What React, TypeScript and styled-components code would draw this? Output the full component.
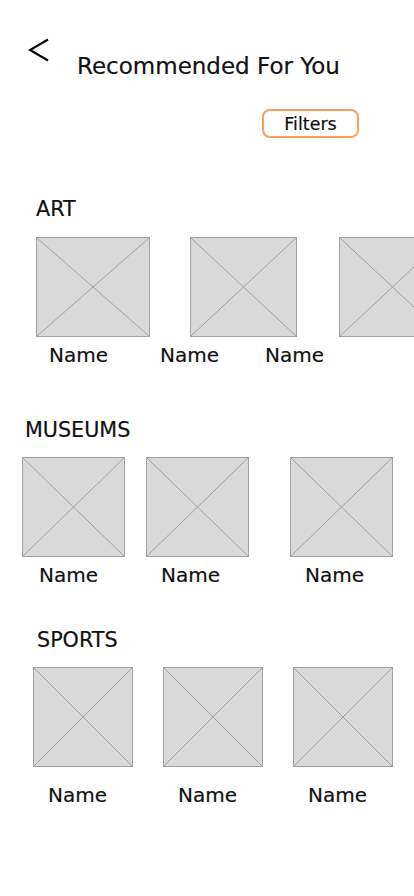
import React from "react";
import styled, { createGlobalStyle } from "styled-components";

const Global = createGlobalStyle`
  html, body { margin: 0; padding: 0; background: #ffffff; }
  body {
    font-family: "DejaVu Sans", "Noto Sans", sans-serif;
    color: #111111;
    overflow: hidden;
    -webkit-text-stroke: 0.2px #111111;
  }
`;

const Page = styled.div`
  width: 414px;
  min-height: 896px;
  overflow: hidden;
  background: #ffffff;
`;

const Header = styled.header`
  display: flex;
  align-items: flex-start;
  padding: 38px 0 0 28px;
`;

const BackButton = styled.button`
  width: 22px;
  height: 24px;
  padding: 0;
  border: none;
  background: none;
  display: flex;
  cursor: pointer;
`;

const Title = styled.h1`
  margin: 14px 0 0 27px;
  font-size: 23px;
  line-height: 28px;
  font-weight: 400;
`;

const FilterRow = styled.div`
  display: flex;
  justify-content: flex-end;
  padding: 29px 55px 0 0;
`;

const FilterButton = styled.button`
  box-sizing: border-box;
  width: 97px;
  height: 29px;
  border: 2px solid #f9a05e;
  border-radius: 8px;
  background: #ffffff;
  font-family: "DejaVu Sans", sans-serif;
  font-size: 17.5px;
  line-height: 22px;
  color: #111111;
  -webkit-text-stroke: 0.2px #111111;
  padding: 0;
  cursor: pointer;
`;

const Section = styled.section<{ $top: number }>`
  margin-top: ${(p) => p.$top}px;
`;

const Heading = styled.h2<{ $ml: number }>`
  margin: 0 0 0 ${(p) => p.$ml}px;
  font-size: 20.7px;
  line-height: 24px;
  font-weight: 400;
`;

const Row = styled.div<{ $top: number }>`
  display: flex;
  margin-top: ${(p) => p.$top}px;
  white-space: nowrap;
`;

const Frame = styled.div<{ $w: number; $ml: number }>`
  flex: none;
  width: ${(p) => p.$w}px;
  height: 100px;
  margin-left: ${(p) => p.$ml}px;
  background: #d9d9d9;
  box-sizing: border-box;
  border: 1px solid #a0a0a0;
  svg { display: block; width: 100%; height: 100%; }
`;

const Name = styled.span<{ $ml: number }>`
  flex: none;
  margin-left: ${(p) => p.$ml}px;
  font-size: 20px;
  line-height: 24px;
  font-weight: 400;
`;

const Placeholder = ({ w, ml }: { w: number; ml: number }) => (
  <Frame $w={w} $ml={ml}>
    <svg viewBox="0 0 100 100" preserveAspectRatio="none">
      <line x1="0" y1="0" x2="100" y2="100" stroke="#a0a0a0" strokeWidth="1" vectorEffect="non-scaling-stroke" />
      <line x1="100" y1="0" x2="0" y2="100" stroke="#a0a0a0" strokeWidth="1" vectorEffect="non-scaling-stroke" />
    </svg>
  </Frame>
);

type Cat = {
  title: string;
  top: number;
  headingLeft: number;
  imgTop: number;
  frames: { w: number; ml: number }[];
  nameTop: number;
  names: number[];
};

const cats: Cat[] = [
  {
    title: "ART",
    top: 59,
    headingLeft: 36,
    imgTop: 16,
    frames: [
      { w: 114, ml: 36 },
      { w: 107, ml: 40 },
      { w: 107, ml: 42 },
    ],
    nameTop: 6,
    names: [49, 52, 46],
  },
  {
    title: "MUSEUMS",
    top: 51,
    headingLeft: 25,
    imgTop: 15,
    frames: [
      { w: 103, ml: 22 },
      { w: 103, ml: 21 },
      { w: 103, ml: 41 },
    ],
    nameTop: 6,
    names: [39, 63, 85],
  },
  {
    title: "SPORTS",
    top: 41,
    headingLeft: 37,
    imgTop: 15,
    frames: [
      { w: 100, ml: 33 },
      { w: 100, ml: 30 },
      { w: 100, ml: 30 },
    ],
    nameTop: 16,
    names: [48, 71, 71],
  },
];

export default function App() {
  return (
    <Page>
      <Global />
      <Header>
        <BackButton aria-label="Back">
          <svg width="22" height="24" viewBox="0 0 22 24">
            <polyline points="20,1.5 2,12 20,22.5" fill="none" stroke="#000" strokeWidth="2.2" strokeLinejoin="miter" />
          </svg>
        </BackButton>
        <Title>Recommended For You</Title>
      </Header>
      <FilterRow>
        <FilterButton>Filters</FilterButton>
      </FilterRow>
      {cats.map((c) => (
        <Section key={c.title} $top={c.top}>
          <Heading $ml={c.headingLeft}>{c.title}</Heading>
          <Row $top={c.imgTop}>
            {c.frames.map((f, i) => (
              <Placeholder key={i} w={f.w} ml={f.ml} />
            ))}
          </Row>
          <Row $top={c.nameTop}>
            {c.names.map((ml, i) => (
              <Name key={i} $ml={ml}>
                Name
              </Name>
            ))}
          </Row>
        </Section>
      ))}
    </Page>
  );
}
